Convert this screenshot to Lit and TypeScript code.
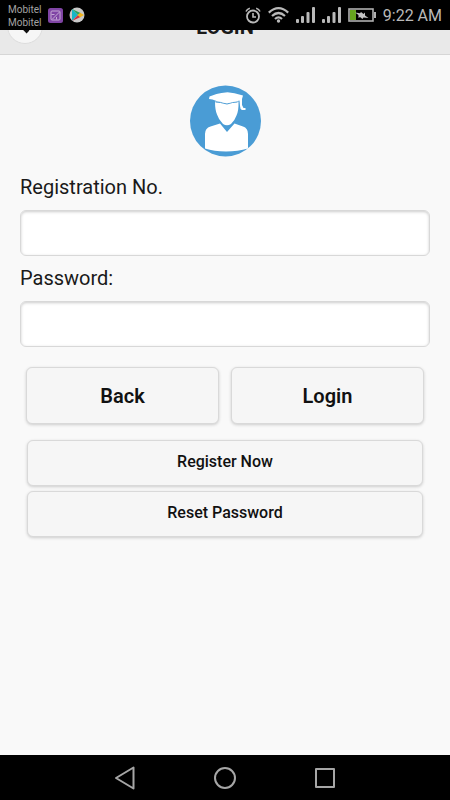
import { LitElement, html, css } from "lit";
import { customElement } from "lit/decorators.js";

@customElement("status-bar")
class StatusBar extends LitElement {
  static styles = css`
    :host {
      display: flex;
      align-items: center;
      justify-content: space-between;
      height: 30px;
      padding: 0 8px;
      background: #000;
      color: #b9b9b9;
    }
    .group {
      display: flex;
      align-items: center;
      gap: 7px;
    }
    .notices {
      gap: 6px;
    }
    .carriers {
      padding-top: 1px;
      font-size: 10px;
      line-height: 13px;
      color: #a3a3a3;
    }
    svg {
      display: block;
      flex: none;
    }
    .time {
      padding-top: 2px;
      font-size: 16px;
      line-height: 28px;
      white-space: nowrap;
    }
  `;

  private signal() {
    return html`<svg width="19" height="16" viewBox="0 0 19 16" fill="#b9b9b9" aria-hidden="true">
      <rect x="0" y="12" width="3" height="4" rx="1" />
      <rect x="5" y="9" width="3" height="7" rx="1" />
      <rect x="10.500" y="5" width="3" height="11" rx="1" />
      <rect x="16" y="0" width="3" height="16" rx="1" />
    </svg>`;
  }

  render() {
    return html`
      <div class="group notices">
        <div class="carriers">
          <div>Mobitel</div>
          <div>Mobitel</div>
        </div>
        <svg width="15" height="15" viewBox="0 0 15 15" aria-hidden="true">
          <rect width="15" height="15" rx="2.500" fill="#8045a5" />
          <g fill="none" stroke="#c5a9d5" stroke-width="1">
            <rect x="3" y="3" width="9" height="9" rx="1" />
            <path d="M4 11.500L11.500 4M3.500 6.500h3M8.500 11.500v-2.500" />
          </g>
        </svg>
        <svg width="16" height="16" viewBox="0 0 16 16" aria-hidden="true">
          <circle cx="8" cy="8" r="7.500" fill="#c9c9c9" />
          <path d="M3 2v12L9 8z" fill="#18b5c8" />
          <path d="M3 2L12 6.200 9 8z" fill="#2aa565" />
          <path d="M3 14L12 9.800 9 8z" fill="#d7303c" />
          <path d="M11.200 5.700L15 8 11.200 10.300 8.500 8z" fill="#f3b51c" />
        </svg>
      </div>
      <div class="group">
        <svg width="16" height="17" viewBox="0 0 16 17" fill="none" stroke="#b9b9b9" stroke-width="1.800" aria-hidden="true">
          <circle cx="8" cy="9.500" r="6" />
          <path d="M8 6v4h3" stroke-width="1.600" />
          <path d="M1 4.500Q2 2 4.800 1.200M15 4.500Q14 2 11.200 1.200" stroke-width="1.600" />
        </svg>
        <svg width="21" height="16" viewBox="0 0 21 16" fill="none" stroke="#b9b9b9" stroke-width="2.200" aria-hidden="true">
          <path d="M.8 5.600Q10.500 -3.200 20.200 5.600" />
          <path d="M4 9Q10.500 3 17 9" />
          <path d="M7 12Q10.500 8.600 14 12" />
          <circle cx="10.500" cy="14" r="1.700" fill="#b9b9b9" stroke="none" />
        </svg>
        ${this.signal()} ${this.signal()}
        <svg width="28" height="14" viewBox="0 0 28 14" aria-hidden="true">
          <rect x="1" y="1" width="24" height="12" fill="none" stroke="#b0b0b0" stroke-width="1.600" />
          <rect x="2" y="2" width="6" height="10" fill="#66a61e" />
          <rect x="26" y="4" width="2" height="6" fill="#b0b0b0" />
          <path d="M7 4.500l5 .8L13 4l2.500 2 1.500-1.500v3l3.500 2.500-5-.5-1 1.500-2.500-2-1.500 1v-3z" fill="#c4c4c4" />
        </svg>
        <span class="time">9:22 AM</span>
      </div>
    `;
  }
}

@customElement("nav-bar")
class NavBar extends LitElement {
  static styles = css`
    :host {
      display: flex;
      justify-content: center;
      align-items: center;
      gap: 76px;
      height: 45px;
      background: #000;
    }
    .key {
      display: flex;
      padding: 0;
      border: 0;
      background: none;
    }
  `;

  render() {
    return html`
      <button class="key" aria-label="Back">
        <svg width="24" height="24" viewBox="0 0 24 24" fill="none" stroke="#a6a6a6" stroke-width="2" stroke-linejoin="round">
          <path d="M20.500 1.500v21L3 12z" />
        </svg>
      </button>
      <button class="key" aria-label="Home">
        <svg width="24" height="24" viewBox="0 0 24 24" fill="none" stroke="#a6a6a6" stroke-width="2">
          <circle cx="12" cy="12" r="10" />
        </svg>
      </button>
      <button class="key" aria-label="Recent apps">
        <svg width="24" height="24" viewBox="0 0 24 24" fill="none" stroke="#a6a6a6" stroke-width="2" stroke-linejoin="round">
          <rect x="3" y="3" width="18" height="18" />
        </svg>
      </button>
    `;
  }
}

@customElement("app-root")
class AppRoot extends LitElement {
  static styles = css`
    :host {
      display: flex;
      flex-direction: column;
      min-height: 100vh;
      background: #f9f9f9;
      color: #1a1a1a;
      font-family: Roboto, sans-serif;
    }
    .header {
      display: grid;
      grid-template-columns: 36px 1fr 36px;
      align-items: end;
      align-content: end;
      box-sizing: border-box;
      height: 25px;
      padding: 0 7px;
      overflow: hidden;
      background: #e9e9e9;
      border-bottom: 1px solid #d6d6d6;
    }
    .return {
      display: flex;
      align-items: center;
      justify-content: center;
      box-sizing: border-box;
      width: 36px;
      height: 36px;
      margin-bottom: 10px;
      padding: 0;
      border: 1px solid #ddd;
      border-radius: 50%;
      background: #f6f6f6;
    }
    .title {
      margin: 0 0 15px;
      font-size: 20px;
      line-height: 24px;
      font-weight: 700;
      text-align: center;
    }
    main {
      flex: 1;
      padding: 30px 20px;
    }
    .avatar {
      display: block;
      margin: 0 auto 16px;
    }
    label {
      display: block;
      font-size: 20px;
      line-height: 28px;
      margin-bottom: 9px;
    }
    input {
      display: block;
      box-sizing: border-box;
      width: 100%;
      height: 46px;
      margin-bottom: 8px;
      padding: 0 10px;
      border: 1px solid #d8d8d8;
      border-radius: 6px;
      background: #fff;
      box-shadow: inset 0 1px 3px #ccc;
      font: inherit;
      font-size: 20px;
    }
    .pair {
      display: grid;
      grid-template-columns: 1fr 1fr;
      gap: 12px;
      margin: 20px 6px 16px;
    }
    .stack {
      display: grid;
      gap: 5px;
      margin: 0 7px;
    }
    .button {
      box-sizing: border-box;
      width: 100%;
      border: 1px solid #d9d9d9;
      border-radius: 6px;
      background: #f6f6f6;
      box-shadow: 0 1px 3px #ccc;
      color: #111;
      font-family: inherit;
    }
    .large {
      height: 57px;
      font-size: 20px;
      font-weight: 600;
    }
    .small {
      height: 46px;
      padding: 0 0 4px;
      font-size: 16px;
      font-weight: 500;
    }
  `;

  render() {
    return html`
      <status-bar></status-bar>
      <header class="header">
        <button class="return" aria-label="Return">
          <svg width="16" height="16" viewBox="0 0 16 16" fill="none" stroke="#111" stroke-width="4">
            <path d="M11 2L5 8l6 6" />
          </svg>
        </button>
        <h1 class="title">LOGIN</h1>
      </header>
      <main>
        <svg class="avatar" width="72" height="72" viewBox="0 0 72 72" role="img" aria-label="Student">
          <circle cx="36.500" cy="36" r="35.500" fill="#4a9cd5" />
          <path
            d="M16 63.500V49q0-6 5.500-7.500l9.500-3L38 47l7.500-8.500 8.500 3q5 1.500 5 7.500v14.500Q49 66.500 37 66.500T16 63.500z"
            fill="#fff"
          />
          <path
            d="M26 16.500h23.500q.3 9-2 14-1.500 4.500-5.500 8.500-4 2.500-8 0-4.500-4.500-6-9.500Q26 25 26 16.500z"
            fill="#fff"
          />
          <path d="M26.500 17l5 .5 6.500 1.500 5.500-1.500 5-.5" fill="none" stroke="#4a9cd5" />
          <path
            d="M20.500 11.500l7-2.500 5-1 6-.8 7 1 8.500 2.300-1 3.500v6l1.500 3h2v2h-3.500q-2-1-2-4l-.5-5.500-3.500 1-9.500 1.500-10-2-4-1.500-3.500-.5z"
            fill="#fff"
          />
        </svg>
        <form @submit=${(e: Event) => e.preventDefault()}>
          <label for="registration">Registration No.</label>
          <input id="registration" type="text" />
          <label for="password">Password:</label>
          <input id="password" type="password" />
          <div class="pair">
            <button class="button large" type="button">Back</button>
            <button class="button large" type="submit">Login</button>
          </div>
          <div class="stack">
            <button class="button small" type="button">Register Now</button>
            <button class="button small" type="button">Reset Password</button>
          </div>
        </form>
      </main>
      <nav-bar></nav-bar>
    `;
  }
}
